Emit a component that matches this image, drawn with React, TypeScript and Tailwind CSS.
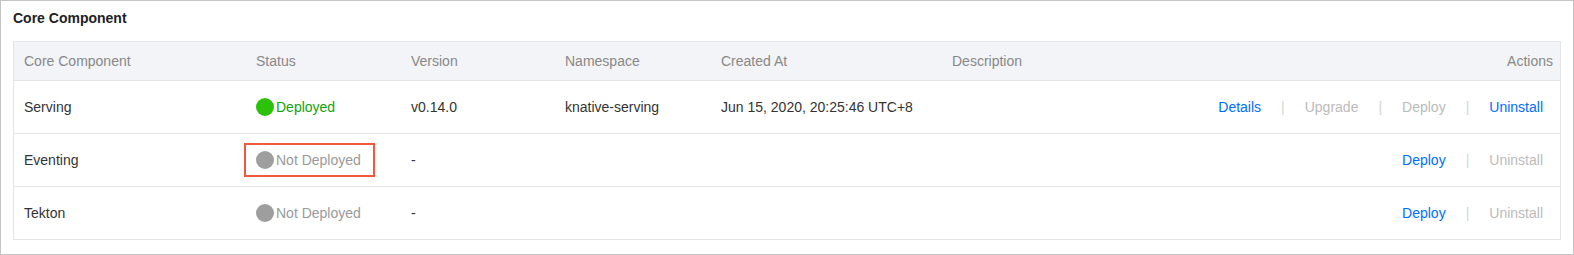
import React from "react";

type Action = { label: string; enabled: boolean };

type Row = {
  name: string;
  deployed: boolean;
  version: string;
  namespace: string;
  createdAt: string;
  description: string;
  actions: Action[];
  highlight?: boolean;
};

const rows: Row[] = [
  {
    name: "Serving",
    deployed: true,
    version: "v0.14.0",
    namespace: "knative-serving",
    createdAt: "Jun 15, 2020, 20:25:46 UTC+8",
    description: "",
    actions: [
      { label: "Details", enabled: true },
      { label: "Upgrade", enabled: false },
      { label: "Deploy", enabled: false },
      { label: "Uninstall", enabled: true },
    ],
  },
  {
    name: "Eventing",
    deployed: false,
    version: "-",
    namespace: "",
    createdAt: "",
    description: "",
    highlight: true,
    actions: [
      { label: "Deploy", enabled: true },
      { label: "Uninstall", enabled: false },
    ],
  },
  {
    name: "Tekton",
    deployed: false,
    version: "-",
    namespace: "",
    createdAt: "",
    description: "",
    actions: [
      { label: "Deploy", enabled: true },
      { label: "Uninstall", enabled: false },
    ],
  },
];

function StatusBadge({ deployed }: { deployed: boolean }) {
  return (
    <span className="flex items-center gap-[2px]">
      <span
        className={
          deployed
            ? "w-[18px] h-[18px] rounded-full bg-[#2ec10c]"
            : "w-[18px] h-[18px] rounded-full bg-[#9e9e9e]"
        }
      />
      <span className={deployed ? "text-[#13a10e]" : "text-[#999999]"}>
        {deployed ? "Deployed" : "Not Deployed"}
      </span>
    </span>
  );
}

export default function App() {
  return (
    <div
      className="w-[1574px] h-[255px] bg-white border border-[#c4c4c4] px-3 pt-[6px] text-[14px] text-[#333333]"
      style={{ fontFamily: '"Liberation Sans", Arial, sans-serif' }}
    >
      <h2 className="h-[22px] leading-[22px] font-bold text-[14px] text-[#222222] mb-[12px]">
        Core Component
      </h2>

      <div className="border border-[#e3e5ea]">
        {/* header */}
        <div className="flex h-[39px] items-center bg-[#f3f4f7] border-b border-[#e3e5ea] text-[#888888]">
          <div className="w-[232px] pl-[10px]">Core Component</div>
          <div className="w-[155px] pl-[10px]">Status</div>
          <div className="w-[154px] pl-[10px]">Version</div>
          <div className="w-[156px] pl-[10px]">Namespace</div>
          <div className="w-[231px] pl-[10px]">Created At</div>
          <div className="flex-1 pl-[10px]">Description</div>
          <div className="pr-[7px] text-right">Actions</div>
        </div>

        {rows.map((row, i) => (
          <div
            key={row.name}
            className={
              i < rows.length - 1
                ? "flex h-[53px] items-center border-b border-[#e3e5ea]"
                : "flex h-[52px] items-center"
            }
          >
            <div className="w-[232px] pl-[10px]">{row.name}</div>
            <div className="w-[155px] pl-[10px] flex items-center">
              {row.highlight ? (
                <span className="flex items-center h-[34px] -ml-[12px] pl-[10px] pr-[12px] border-2 border-[#f0593a]">
                  <StatusBadge deployed={row.deployed} />
                </span>
              ) : (
                <StatusBadge deployed={row.deployed} />
              )}
            </div>
            <div className="w-[154px] pl-[10px]">{row.version}</div>
            <div className="w-[156px] pl-[10px]">{row.namespace}</div>
            <div className="w-[231px] pl-[10px] whitespace-nowrap">{row.createdAt}</div>
            <div className="flex-1 pl-[10px]">{row.description}</div>
            <div className="flex items-center pr-[17px]">
              {row.actions.map((a, j) => (
                <React.Fragment key={a.label}>
                  {j > 0 && <span className="mx-[20px] text-[#d5d5d5]">|</span>}
                  <span
                    className={
                      a.enabled
                        ? "text-[#006eff] cursor-pointer"
                        : "text-[#bbbbbb] cursor-not-allowed"
                    }
                  >
                    {a.label}
                  </span>
                </React.Fragment>
              ))}
            </div>
          </div>
        ))}
      </div>
    </div>
  );
}
